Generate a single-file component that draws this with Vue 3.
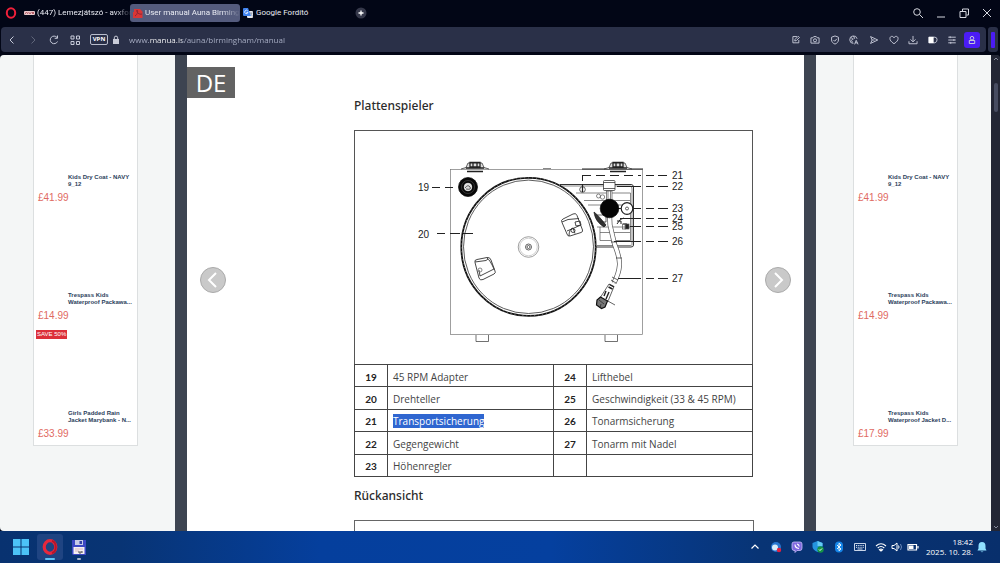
<script setup>
const toolIcons = [
  { name: 'Easy setup', d: 'M9.5 2.5H3v10h9.500V8M6 9.500l.5-2.500L11.500 2 13.500 4 8.500 9z' },
  { name: 'Snapshot', d: 'M1.500 4.500H4.500L6 2.500H10L11.500 4.500H14.500V13H1.500zM10.500 8.500a2.500 2.500 0 1 1-5 0a2.500 2.500 0 1 1 5 0' },
  { name: 'Ad blocker', d: 'M8 1.500L13.500 3.500V8C13.500 11 11 13.500 8 14.500C5 13.500 2.500 11 2.500 8V3.500zM5.500 8L7.500 10L11 6' },
  { name: 'Translate', d: 'M7 13.500A6 6 0 1 1 13 6M3 4L6 6L4 9L6 12M7 2L9 5L7 7M9 15L11.500 8.500L14.500 15M10 12.500H13.500' },
  { name: 'Flow', d: 'M2.500 2.500L14 8L2.500 13.500L5 8zM5 8H9' },
  { name: 'Favourites', d: 'M8 14C3 10.500 1.500 8.500 1.500 5.500C1.500 1.500 6.500 1 8 4.500C9.500 1 14.500 1.500 14.500 5.500C14.500 8.500 13 10.500 8 14z' },
  { name: 'Downloads', d: 'M8 1.500V10.500M4 7L8 11L12 7M1.500 10V14H14.500V10' },
  { name: 'Battery saver', d: '', battery: true },
  { name: 'Settings', d: 'M2 3.500H14M2 8H14M2 12.500H14M5 2V5M11 6.500V9.500M6 11V14' },
]

const adsLeft = [
  { lines: ['Kids Dry Coat - NAVY', '9_12'], price: '£41.99' },
  { lines: ['Trespass Kids', 'Waterproof Packawa...'], price: '£14.99' },
  { lines: ['Girls Padded Rain', 'Jacket Marybank - N...'], price: '£33.99', badge: 'SAVE 50%' },
]
const adsRight = [
  { lines: ['Kids Dry Coat - NAVY', '9_12'], price: '£41.99' },
  { lines: ['Trespass Kids', 'Waterproof Packawa...'], price: '£14.99' },
  { lines: ['Trespass Kids', 'Waterproof Jacket D...'], price: '£17.99' },
]

const parts = [
  ['19', '45 RPM Adapter', '24', 'Lifthebel'],
  ['20', 'Drehteller', '25', 'Geschwindigkeit (33 & 45 RPM)'],
  ['21', 'Transportsicherung', '26', 'Tonarmsicherung'],
  ['22', 'Gegengewicht', '27', 'Tonarm mit Nadel'],
  ['23', 'Höhenregler', '', ''],
]

const callouts = [
  { n: '21', y: 175, from: 582 },
  { n: '22', y: 186, from: 617 },
  { n: '23', y: 208, from: 633 },
  { n: '24', y: 218, from: 620 },
  { n: '25', y: 226, from: 630 },
  { n: '26', y: 241, from: 614 },
  { n: '27', y: 278, from: 618 },
]
</script>

<template>
  <div class="screen">
    <header class="tabs">
      <button class="logo" aria-label="Opera menu">
        <svg viewBox="0 0 12 12" width="12" height="12"><ellipse cx="6" cy="6" rx="4.200" ry="4.700" fill="none" stroke="#f0203a" stroke-width="2" /></svg>
      </button>
      <button class="tab first">
        <svg viewBox="0 0 11 10" width="11" height="10"><rect y="3" width="11" height="4" rx="1" fill="#e9c9cb" /><path d="M1 6L2.500 4L4 6M4.500 4L6 6L7.500 4M8 4L10 6M10 4L8 6" stroke="#a8434e" fill="none" stroke-width=".8" /></svg>
        <span>(447) Lemezjátszó - avxfor</span>
      </button>
      <button class="tab active">
        <svg viewBox="0 0 10 10" width="10" height="10"><path d="M1 1H7L9.500 3.500V10H0V4H1z" fill="#d93636" /><path d="M2 8C5 6 5 3 4 2C3 4 6 7 9 6" stroke="#8c2435" fill="none" /></svg>
        <span>User manual Auna Birming</span>
      </button>
      <button class="tab third">
        <svg viewBox="0 0 10 10" width="10" height="10"><rect x="4" y="3" width="6" height="7" rx="1" fill="#e4e7ee" /><path d="M1 0H5L8 8H1Q0 8 0 7V1Q0 0 1 0" fill="#3f83f0" /><path d="M4.800 3A1.700 1.700 0 1 0 5 4.500H3.500" stroke="#fff" fill="none" stroke-width=".8" /><path d="M7 5H9.500M8 5C8 7 9 8 9.500 8" stroke="#6d7c97" fill="none" stroke-width=".7" /></svg>
        <span>Google Fordító</span>
      </button>
      <button class="plus" aria-label="New tab">
        <svg viewBox="0 0 12 12" width="12" height="12"><circle cx="6" cy="6" r="5.500" fill="#35384a" /><path d="M6 3.500V8.500M3.500 6H8.500" stroke="#fff" stroke-width="1.300" /></svg>
      </button>
      <div class="window-buttons">
        <button aria-label="Search tabs"><svg viewBox="0 0 12 12" width="12" height="12"><circle cx="5" cy="5" r="3.300" /><path d="M7.500 7.500L11 11" /></svg></button>
        <button aria-label="Minimize"><svg viewBox="0 0 12 12" width="12" height="12"><path d="M2 10H10" /></svg></button>
        <button aria-label="Restore"><svg viewBox="0 0 12 12" width="12" height="12"><path d="M2 4.500H8V10.500H2zM4.500 4V2H10.500V8H8.500" /></svg></button>
        <button aria-label="Close"><svg viewBox="0 0 12 12" width="12" height="12"><path d="M2 2L10 10M10 2L2 10" /></svg></button>
      </div>
    </header>

    <div class="bar-row">
      <nav class="toolbar">
        <div class="nav-buttons">
          <button aria-label="Back"><svg viewBox="0 0 12 12" width="12" height="12"><path d="M7.500 2.500L4 6L7.500 9.500" /></svg></button>
          <button aria-label="Forward" class="dim"><svg viewBox="0 0 12 12" width="12" height="12"><path d="M4.500 2.500L8 6L4.500 9.500" /></svg></button>
          <button aria-label="Reload"><svg viewBox="0 0 12 12" width="12" height="12"><path d="M9.500 7.500A3.800 3.800 0 1 1 9 3.500M9.500 1.500V4.300H6.700" /></svg></button>
          <button aria-label="Speed dial"><svg viewBox="0 0 12 12" width="12" height="12"><path d="M2 2H5V5H2zM7.500 2H10.500V5H7.500zM2 7.500H5V10.500H2zM7.500 7.500H10.500V10.500H7.500z" /></svg></button>
        </div>
        <button class="vpn">VPN</button>
        <svg class="lock" viewBox="0 0 8 10" width="8" height="10"><rect x="1" y="4" width="6" height="5" fill="#c9ccd8" /><path d="M2.300 4.500V2.800A1.700 1.700 0 0 1 5.700 2.800V4.500" fill="none" stroke="#c9ccd8" /></svg>
        <input class="url" type="text" aria-label="Address" value="www.manua.ls/auna/birmingham/manual" />
        <div class="tools">
          <button v-for="t in toolIcons" :key="t.name" :aria-label="t.name">
            <svg viewBox="0 0 16 16" width="10" height="10">
              <path v-if="!t.battery" :d="t.d" />
              <g v-else><path d="M1.500 3.500H11Q14.500 3.500 14.500 7.500T11 12.500H1.500z" /><path class="solid" d="M1 3H9V13H1z" /></g>
            </svg>
          </button>
        </div>
        <button class="profile" aria-label="Profile"><svg viewBox="0 0 10 10" width="10" height="10"><circle cx="5" cy="3.200" r="1.800" /><path d="M2.300 5.500H7.700V8.500H2.300z" /></svg></button>
      </nav>
      <div class="side-toggle"><i></i></div>
    </div>

    <div class="viewport">
      <aside class="gutter left">
        <div class="card">
          <a v-for="(ad, i) in adsLeft" :key="i" href="#" class="ad">
            <b v-if="ad.badge" class="badge">{{ ad.badge }}</b>
            <span class="title">{{ ad.lines[0] }}<br />{{ ad.lines[1] }}</span>
            <span class="price">{{ ad.price }}</span>
          </a>
        </div>
      </aside>
      <main class="paper">
        <div class="lang">DE</div>
        <article>
          <h2>Plattenspieler</h2>
          <svg class="figure" viewBox="355 131 397 233">
            <g fill="none" stroke="#555" stroke-width=".7">
              <rect x="450.500" y="169.500" width="192" height="165" stroke="#777" />
              <path d="M582 169H643" stroke="#222" stroke-width="1" />
              <path d="M543 168.500H551" />
              <path d="M476 335V341.500H488.500V335M605 335V341.500H617.500V335" stroke="#333" />
              <g v-for="x in [475, 618]" :key="x" stroke="#222">
                <path :d="`M${x - 14} 169L${x - 9} 167.500L${x - 7} 163H${x + 7}L${x + 9} 167.500L${x + 14} 169`" fill="#ddd" />
                <path :d="`M${x - 5} 167V162.500H${x + 5}V167zM${x - 2} 162.500V167M${x + 2} 162.500V167M${x - 9} 168H${x + 9}`" stroke-width="1.300" />
                <path :d="`M${x - 8} 171.500H${x + 8}`" stroke-width="1.600" />
              </g>
              <path d="M560 184.500H631Q633.500 184.500 633.500 187V245Q633.500 247 631 247H596" stroke="#333" stroke-width="1" />
              <path d="M562 186H630.500Q632 186 632 189V244.500Q632 245.500 630 245.500H597" />
              <path d="M576 193H630.500V240.500H600V227M584 200.500H630M588 205H630M597 227H630M600 232.500H630" />
              <ellipse cx="528.500" cy="246.800" rx="67.200" ry="69" fill="#fff" stroke="#111" stroke-width="1.800" />
              <ellipse cx="528.500" cy="246.800" rx="67.200" ry="69" stroke="#fff" stroke-width=".4" stroke-dasharray="1 3" />
              <ellipse cx="528.500" cy="246.800" rx="65" ry="66.700" stroke="#333" stroke-width=".8" />
              <circle cx="528.500" cy="247" r="10.300" stroke="#777" />
              <circle cx="528.500" cy="247" r="8.800" stroke="#bbb" />
              <circle cx="528.500" cy="247" r="3" stroke="#222" />
              <circle cx="528.500" cy="247" r="1.500" stroke="#222" />
              <g stroke="#333" stroke-width=".9">
                <path d="M562 222.500Q560.500 220 563 219L573 214Q576 212.500 577 215.500L582.500 230Q583 232 581 232.500L570 236Q567.500 236.500 567 234zM562 222L568 219.500L579 218.500M567 231L581 225M575 222L580 221L581 225L576 226zM569 236Q569 229 573 228L575 233.500" />
                <circle cx="573" cy="230.500" r="2" />
                <path d="M475 262.500Q474 260 477 259.500L487 257.500Q490 257 491 260L495 271Q496 273 494 274L483 279.500Q480 281 479 278zM475 262L486 260.500L488 259M480 276L494 269Q490 260 487 258M480 276L479 270" />
                <circle cx="480" cy="270" r="2" stroke="#777" />
              </g>
              <circle cx="468" cy="187" r="9.500" fill="#080808" stroke="#000" />
              <circle cx="468" cy="187" r="6.500" stroke="#777" stroke-width=".4" />
              <circle cx="468" cy="187" r="3.800" fill="#ddd" stroke="#fff" />
              <path d="M465 188Q468 184 470 187T466 189" stroke="#222" />
              <circle cx="582.500" cy="189.500" r="2.800" stroke="#222" />
              <path d="M582.500 184V192" stroke="#222" stroke-width="1.200" />
              <circle cx="598.500" cy="196" r="2" /><circle cx="602.500" cy="197" r="2.200" />
              <path d="M594 212C598 215 601 219 606 225L604 227C598 223 595 219 594 212z" fill="#333" stroke="#111" />
              <path d="M597 215H606V222H600M610 210V218" stroke="#222" />
              <rect x="606.500" y="191" width="5.500" height="9" fill="#fff" /><path d="M608 191V200M610.500 191V200" />
              <rect x="603.500" y="180.500" width="11.500" height="10" rx="1" fill="#fff" stroke="#222" />
              <path d="M603.500 182.500H615M603.500 188.500H615" stroke="#222" />
              <circle cx="627" cy="208.500" r="5.800" fill="#fff" stroke="#222" stroke-width="1.200" />
              <circle cx="627" cy="208.500" r="1.500" stroke="#222" />
              <path d="M618 208.500H621M617 224Q620 218 624 218M617 221H621V224M623 224H627" stroke="#222" stroke-width="1" />
              <path d="M609.500 214L610 225L614.500 244Q620 258 619.500 265Q619 273 614 283" stroke="#555" stroke-width="5" />
              <path d="M609.500 214L610 225L614.500 244Q620 258 619.500 265Q619 273 614 283" stroke="#fff" stroke-width="3.600" />
              <path d="M612 277L618 280M611 280L616 283M616 258L622 258M617 242H611" stroke="#222" />
              <path d="M609 284L614 286.500L608.500 300L605.500 303L602 302L600 298z" fill="#fff" stroke="#222" />
              <path d="M609.500 284.500L614 287M608.500 287L612.500 289M606 291L604 296M609 292L606 299" stroke="#222" stroke-width="1.400" />
              <path d="M600.500 297L607.500 301L605 307L601.500 308.500L596.500 305L597 300z" fill="#777" stroke="#111" stroke-width="1.200" />
              <path d="M599 300L604 304M601 304L600 308M606 300L615 305" stroke="#222" />
              <circle cx="609.500" cy="208.500" r="9.300" fill="#050505" stroke="#000" />
              <rect x="625" y="224" width="4" height="5" fill="#222" /><rect x="622.500" y="224" width="3" height="5" />
              <g stroke="#222" stroke-width="1">
                <path d="M582.500 181V175.500" />
                <path v-for="c in callouts" :key="c.n" :d="`M${c.from} ${c.y + .5}H641M646 ${c.y + .5}H654M658 ${c.y + .5}H668`" :stroke-dasharray="c.n === '21' ? '9 5' : 'none'" />
                <path d="M432 187.500H440M445 187.500H453M437 233.500H445M450 233.500H460M463 233.500H473" />
              </g>
            </g>
            <g class="labels">
              <text v-for="c in callouts" :key="c.n" x="672" :y="c.y + 4">{{ c.n }}</text>
              <text x="418" y="191">19</text>
              <text x="418" y="238">20</text>
            </g>
          </svg>
          <table>
            <colgroup><col class="num" /><col class="name" /><col class="num" /><col class="name" /></colgroup>
            <tbody>
              <tr v-for="r in parts" :key="r[0]">
                <th>{{ r[0] }}</th>
                <td><mark v-if="r[0] === '21'">{{ r[1] }}</mark><template v-else>{{ r[1] }}</template></td>
                <th>{{ r[2] }}</th>
                <td>{{ r[3] }}</td>
              </tr>
            </tbody>
          </table>
          <h2 class="second">Rückansicht</h2>
          <div class="next-figure"></div>
        </article>
        <button class="pager prev" aria-label="Previous page"><svg viewBox="0 0 26 26" width="26" height="26"><path d="M16 6L9 13L16 20" /></svg></button>
        <button class="pager next" aria-label="Next page"><svg viewBox="0 0 26 26" width="26" height="26"><path d="M10 6L17 13L10 20" /></svg></button>
      </main>
      <aside class="gutter right">
        <div class="card">
          <a v-for="(ad, i) in adsRight" :key="i" href="#" class="ad">
            <span class="title">{{ ad.lines[0] }}<br />{{ ad.lines[1] }}</span>
            <span class="price">{{ ad.price }}</span>
          </a>
        </div>
      </aside>
      <div class="scrollbar">
        <svg viewBox="0 0 8 8" width="8" height="8"><path d="M2 5L4 3L6 5" fill="none" stroke="#85899a" /></svg>
        <i></i>
        <svg class="down" viewBox="0 0 8 8" width="8" height="8"><path d="M2 3L4 5L6 3" fill="none" stroke="#85899a" /></svg>
      </div>
    </div>

    <footer class="taskbar">
      <button aria-label="Start"><svg viewBox="0 0 16 16" width="16" height="16"><path d="M0 0H7.500V7.500H0zM8.500 0H16V7.500H8.500zM0 8.500H7.500V16H0zM8.500 8.500H16V16H8.500z" fill="#4cc3f7" /></svg></button>
      <button class="running" aria-label="Opera"><svg viewBox="0 0 18 18" width="18" height="18"><ellipse cx="9" cy="9" rx="5.800" ry="6.300" fill="none" stroke="#e8283c" stroke-width="3.200" /><path d="M11 3C16 4 16 14 11 15" fill="none" stroke="#b5152b" stroke-width="2" /></svg></button>
      <button class="background" aria-label="Total Commander"><svg viewBox="0 0 14 15" width="14" height="15"><path d="M0 0H14V15H1L0 14z" fill="#3d48c4" /><path d="M3 0H11V5H3z" fill="#c8cce8" /><path d="M7.500 1H10V4H7.500z" fill="#3340a8" /><path d="M1.500 7H12.500V14H1.500z" fill="#f5f0f2" /><path d="M3 9H11M3 11H7" stroke="#ddb9bf" /><path d="M7 11V13H9V11M10 11V13" stroke="#555" fill="none" /></svg></button>
      <div class="tray">
        <button aria-label="Show hidden icons"><svg viewBox="0 0 12 12" width="12" height="12"><path d="M2.500 7.500L6 4L9.500 7.500" fill="none" stroke="#fff" stroke-width="1.200" /></svg></button>
        <button aria-label="Sync"><svg viewBox="0 0 12 12" width="12" height="12"><circle cx="6" cy="6" r="5" fill="#2876d0" /><circle cx="5" cy="6.500" r="3" fill="#d9ecfa" /><circle cx="9" cy="9" r="2.200" fill="#e5203e" /></svg></button>
        <button aria-label="Viber"><svg viewBox="0 0 12 12" width="12" height="12"><path d="M3 1H9Q11 1 11 3V7Q11 9.500 9 9.500H6L4 11.500V9.500H3Q1 9.500 1 7V3Q1 1 3 1" fill="#8069df" stroke="#c9bdf7" stroke-width=".8" /><path d="M4 3.500Q4 7 8 7.500M6 3Q8 3.500 8.200 5.500" stroke="#fff" fill="none" stroke-width="1.200" /></svg></button>
        <button aria-label="Security"><svg viewBox="0 0 12 12" width="12" height="12"><path d="M5.500 0L10.500 2V6Q10 9 5.500 11Q1 9 .5 6V2z" fill="#2493df" /><path d="M5.500 0L10.500 2V5H5.500z" fill="#65caf5" /><circle cx="8.500" cy="8.500" r="3.200" fill="#159447" /><path d="M7 8.500L8 9.500L10 7.500" stroke="#fff" fill="none" /></svg></button>
        <button aria-label="Bluetooth"><svg viewBox="0 0 12 12" width="12" height="12"><rect x="2" y=".5" width="8" height="11" rx="4" fill="#1685e8" /><path d="M4 4L8 8L6 9.700V2.300L8 4L4 8" stroke="#fff" fill="none" stroke-width=".9" /></svg></button>
        <button aria-label="Keyboard"><svg viewBox="0 0 12 12" width="12" height="12"><path d="M.5 2.500H11.500V9.500H.5z" fill="none" stroke="#dfe8f6" stroke-width=".9" /><path d="M2 4.500H10M2 6.300H10" stroke="#dfe8f6" stroke-dasharray="1 .8" /><path d="M3.500 8H8.500" stroke="#dfe8f6" stroke-width=".9" /></svg></button>
        <button class="status" aria-label="Network, sound and battery">
          <svg viewBox="0 0 12 12" width="12" height="12"><path d="M1 5Q6 .5 11 5M2.700 7Q6 4 9.300 7M4.400 8.700Q6 7.300 7.600 8.700L6 10z" fill="none" stroke="#fff" stroke-width="1.100" /></svg>
          <svg viewBox="0 0 12 12" width="12" height="12"><path d="M1 4.500H3L6 2V10L3 7.500H1zM7.500 4.500Q8.500 6 7.500 7.500" fill="none" stroke="#fff" /><path d="M9.500 3Q11.500 6 9.500 9" fill="none" stroke="#6f8cbc" /></svg>
          <svg viewBox="0 0 12 12" width="12" height="12"><path d="M1 3.500H9.500V9H1zM11 5V7.500" fill="none" stroke="#fff" stroke-width="1.200" /><path d="M2 4.500H6.500V8H2z" fill="#fff" /></svg>
        </button>
        <div class="clock">18:42<br />2025. 10. 28.</div>
        <button class="bell" aria-label="Notifications"><svg viewBox="0 0 12 12" width="12" height="12"><path d="M6 1Q9.500 1 9.500 5V7.500L10.500 9.500H1.500L2.500 7.500V5Q2.500 1 6 1M4.500 10.500H7.500Q6 12 4.500 10.500" fill="#8fe0ff" /></svg></button>
      </div>
    </footer>
  </div>
</template>

<style>
body { margin: 0; background: #020616; }
</style>

<style scoped>
* { box-sizing: border-box; }
.screen { display: flex; flex-direction: column; height: 100vh; overflow: hidden; background: #020616; font-family: "Open Sans", "Noto Sans", sans-serif; }
button { display: flex; align-items: center; justify-content: center; margin: 0; padding: 0; border: 0; background: none; color: inherit; font: inherit; }
svg { flex: none; }

.tabs { display: flex; align-items: center; height: 25px; margin-bottom: 2px; color: #e9ebf3; font-family: Roboto, sans-serif; font-size: 8px; line-height: 18px; }
.logo { width: 22px; }
.tab { height: 18px; gap: 2px; justify-content: flex-start; border-radius: 3px; }
.tab span { flex: 1; white-space: nowrap; text-align: left; }
.first { width: 105px; padding-left: 2px; }
.first span, .active span { mask-image: linear-gradient(90deg, #000 82%, transparent); }
.active { width: 110px; margin-left: 3px; padding: 0 3px; background: #545b7d; }
.third { width: 113px; margin-left: 2px; padding-left: 1px; gap: 3px; }
.plus { width: 12px; }
.window-buttons { display: flex; margin: 0 2px 0 auto; }
.window-buttons button { width: 23px; }
.window-buttons svg { fill: none; stroke: #d5d7df; stroke-width: 1; }

.bar-row { display: flex; gap: 2px; height: 25px; margin: 0 2px 3px 1px; }
.toolbar { display: flex; flex: 1; align-items: center; padding-right: 6px; border-radius: 4px; background: #2a3048; }
.toolbar svg { fill: none; stroke: #c6cad9; stroke-width: 1; }
.nav-buttons { display: flex; margin-right: 5px; }
.nav-buttons button { width: 21px; height: 20px; }
.nav-buttons .dim { opacity: .35; }
.vpn { width: 18px; height: 11px; border: 1px solid #b9bdcc; border-radius: 2px; color: #fff; font-size: 6px; font-weight: 700; line-height: 9px; }
.toolbar .lock { margin-left: 4px; stroke: none; }
.url { flex: 1; min-width: 0; margin-left: 9px; padding: 0; border: 0; outline: 0; background: linear-gradient(90deg, #aeb4ca 21px, #fff 21px, #fff 53px, #aeb4ca 53px); background-clip: text; color: transparent; font: 8px/16px "Open Sans", sans-serif; }
.tools { display: grid; grid-template-columns: repeat(9, 1fr); width: 176px; }
.tools svg { stroke-width: 1.5; }
.tools .solid { fill: #fff; stroke: none; }
.profile { width: 16px; height: 16px; margin-left: 2px; border-radius: 3px; background: #4b1cf5; }
.side-toggle { display: flex; align-items: center; justify-content: center; width: 10px; border-radius: 3px; background: #2a3048; }
.side-toggle i { width: 4px; height: 16px; border-radius: 1px; background: #4b1cf5; }

.viewport { display: grid; flex: 1; grid-template-columns: 187fr 617fr 187fr 9px; min-height: 0; overflow: hidden; border-radius: 4px 4px 0 4px; background: #3d4451; }
.gutter { display: flex; justify-content: center; align-items: flex-start; background: #f4f6f6; }
.left { margin-right: 12px; padding-right: 4px; }
.right { margin-left: 12px; padding-left: 4px; }
.card { width: 105px; padding: 37px 0 1px; border: 1px solid #dcdfe0; border-top: 0; background: #fff; }
.ad { position: relative; display: flex; flex-direction: column; justify-content: flex-end; height: 118px; padding: 0 0 4px 4px; color: #2b3e5b; font-family: "Liberation Sans", Arial, sans-serif; text-decoration: none; white-space: nowrap; }
.ad:first-child { height: 116px; }
.title { margin-bottom: 4px; padding-left: 30px; font-size: 6px; font-weight: 700; line-height: 7px; }
.price { color: #df6a62; font-size: 10px; line-height: 12px; }
.badge { position: absolute; top: 4px; left: 2px; padding: 0 1px; background: #dc2f39; color: #fff; font-size: 6px; font-weight: 400; line-height: 9px; }

.paper { position: relative; overflow: hidden; padding-top: 12px; background: #fff; }
.lang { width: 48px; height: 31px; background: #636363; color: #fff; font-size: 24px; line-height: 31px; text-align: center; }
article { padding: 0 51px 0 167px; color: #333; }
h2 { margin: 0; color: #2b2b2b; font: 500 12px/16px "Noto Sans", sans-serif; }
.figure { display: block; width: 100%; margin-top: 16px; border: 1px solid #555; border-bottom: 0; }
.labels { fill: #222; font: 10px "Liberation Sans", Arial, sans-serif; }
table { width: 100%; height: 113px; border-collapse: collapse; table-layout: fixed; }
col.num { width: 33px; }
th, td { height: 22px; padding: 2px 0 0; border: 1px solid #444; line-height: 14px; }
th { color: #222; font-size: 10px; font-weight: 700; font-family: Lato, sans-serif; }
td { padding-left: 5px; color: #444; font-size: 10px; white-space: nowrap; }
mark { background: #2f66d0; color: #fff; }
.second { margin-top: 11px; }
.next-figure { height: 80px; margin: 16px -1px 0 0; border: 1px solid #666; }
.pager { position: absolute; top: 212px; width: 26px; height: 26px; border: 1px solid #aaa; border-radius: 50%; background: #c9c9c9; }
.pager path { fill: none; stroke: #fff; stroke-width: 2; }
.prev { left: 13px; }
.next { right: 13px; }
.scrollbar { display: flex; flex-direction: column; align-items: center; background: #232635; }
.scrollbar i { width: 4px; height: 29px; margin-top: 20px; border-radius: 2px; background: #474c61; }
.scrollbar .down { margin-top: auto; }

.taskbar { display: flex; align-items: center; height: 32px; padding-left: 8px; background: linear-gradient(90deg, #083270 0, #083474 12%, #053f9d 32%, #05409f 55%, #083475 76%, #082f6c 100%); color: #fff; }
.taskbar > button { position: relative; width: 26px; height: 26px; margin-right: 3px; border-radius: 3px; }
.running { background: #1f4482; }
.running::after, .background::after { content: ""; position: absolute; bottom: 0; left: 50%; width: 10px; height: 2px; margin-left: -5px; border-radius: 1px; background: #5ec3f5; }
.background::after { width: 4px; margin-left: -2px; background: #a9b6cc; }
.tray { display: flex; align-items: center; margin-left: auto; padding-right: 12px; }
.tray button { width: 21px; height: 24px; }
.tray .status { gap: 4px; width: 54px; }
.clock { width: 49px; font-size: 8px; line-height: 10px; text-align: right; white-space: nowrap; }
.tray .bell { width: 12px; margin-left: 3px; }
</style>
